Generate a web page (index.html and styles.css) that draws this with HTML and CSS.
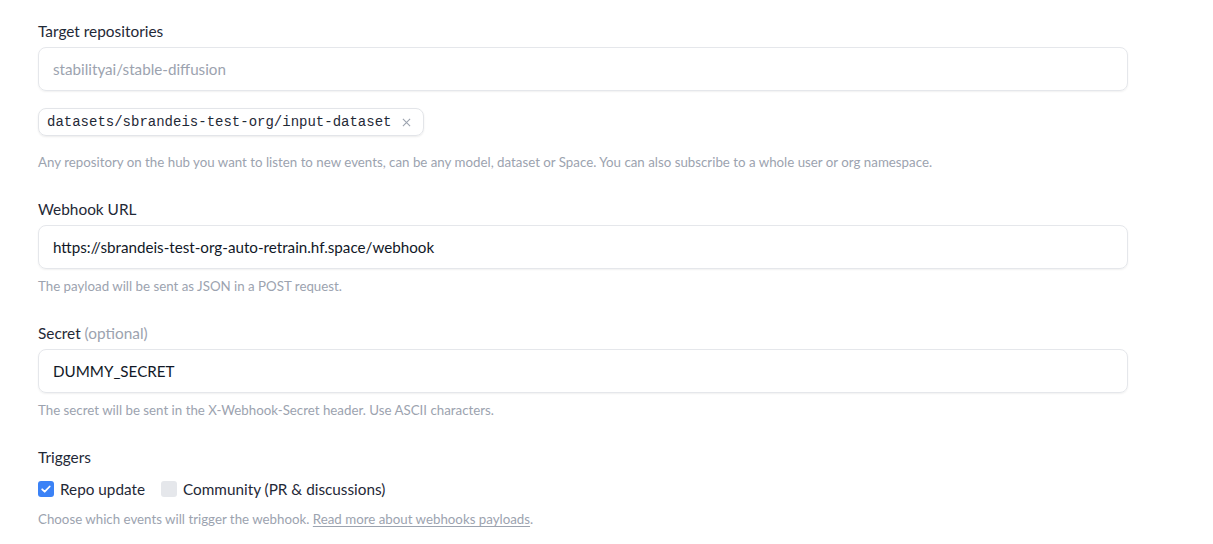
FILE: index.html
```html
<!DOCTYPE html>
<html lang="en">
<head>
<meta charset="utf-8">
<title>Webhook settings</title>
<link rel="stylesheet" href="styles.css">
</head>
<body>
<form class="form">
  <div class="field">
    <label class="label">Target repositories</label>
    <div class="input placeholder">stabilityai/stable-diffusion</div>
    <div class="chips">
      <span class="chip">datasets/sbrandeis-test-org/input-dataset
        <svg class="chip-x" viewBox="0 0 10 10" width="9" height="9"><path d="M1 1L9 9M9 1L1 9" stroke="#9ca3af" stroke-width="1.2" fill="none"/></svg>
      </span>
    </div>
    <p class="help help-chips">Any repository on the hub you want to listen to new events, can be any model, dataset or Space. You can also subscribe to a whole user or org namespace.</p>
  </div>

  <div class="field">
    <label class="label">Webhook URL</label>
    <div class="input">https://sbrandeis-test-org-auto-retrain.hf.space/webhook</div>
    <p class="help">The payload will be sent as JSON in a POST request.</p>
  </div>

  <div class="field">
    <label class="label">Secret <span class="optional">(optional)</span></label>
    <div class="input">DUMMY_SECRET</div>
    <p class="help">The secret will be sent in the X-Webhook-Secret header. Use ASCII characters.</p>
  </div>

  <div class="field">
    <label class="label">Triggers</label>
    <div class="checks">
      <label class="check">
        <span class="box box-on"><svg viewBox="0 0 16 16" width="16" height="16"><path d="M4.2 8.3l2.5 2.4 5-5.2" stroke="#fff" stroke-width="1.8" fill="none" stroke-linecap="round" stroke-linejoin="round"/></svg></span>
        Repo update
      </label>
      <label class="check">
        <span class="box"></span>
        Community (PR &amp; discussions)
      </label>
    </div>
    <p class="help help-last">Choose which events will trigger the webhook. <a href="#" class="link">Read more about webhooks payloads</a>.</p>
  </div>
</form>
</body>
</html>
```
FILE: styles.css
```css
* { box-sizing: border-box; }
html, body { background: #fff; }
body {
  margin: 0;
  font-family: Lato, "Liberation Sans", sans-serif;
  color: #111827;
}
.form {
  width: 1090px;
  margin: 0 0 0 38px;
  padding-top: 19px;
  display: flex;
  flex-direction: column;
  gap: 25px;
}
.field { display: flex; flex-direction: column; }
.label {
  font-size: 15.4px;
  line-height: 24px;
  color: #1f2937;
  margin-bottom: 4px;
}
.optional { color: #9ca3af; }
.input {
  height: 44px;
  border: 1px solid #e5e7eb;
  border-radius: 8px;
  box-shadow: 0 1px 2px rgba(0,0,0,0.06);
  padding: 0 14px;
  display: flex;
  align-items: center;
  font-size: 15.2px;
  color: #111827;
}
.placeholder { color: #9ca3af; }
.chips { margin-top: 17px; display: flex; }
.chip {
  height: 28px;
  width: 386px;
  border: 1px solid #e3e5e9;
  border-radius: 8px;
  box-shadow: 0 1px 2px rgba(0,0,0,0.08);
  padding: 0 0 0 8px;
  display: flex;
  align-items: center;
  font-family: "Liberation Mono", monospace;
  font-size: 14px;
  color: #1f2937;
}
.chip-x { margin-left: 11px; }
.help {
  margin: 7px 0 0;
  font-size: 13.3px;
  line-height: 20px;
  color: #9ca3af;
}
.help-chips { margin-top: 16px; }
.help-last { margin-top: 8px; }
.link { color: #9ca3af; text-decoration: underline; text-underline-offset: 2px; }
.checks { display: flex; gap: 16px; margin-top: 4px; }
.check {
  display: flex;
  align-items: center;
  gap: 6px;
  font-size: 15.3px;
  line-height: 24px;
  color: #1f2937;
}
.box {
  width: 16px;
  height: 16px;
  border-radius: 3px;
  background: #e5e7eb;
  display: inline-flex;
}
.box-on { background: #3b82f6; }
```
